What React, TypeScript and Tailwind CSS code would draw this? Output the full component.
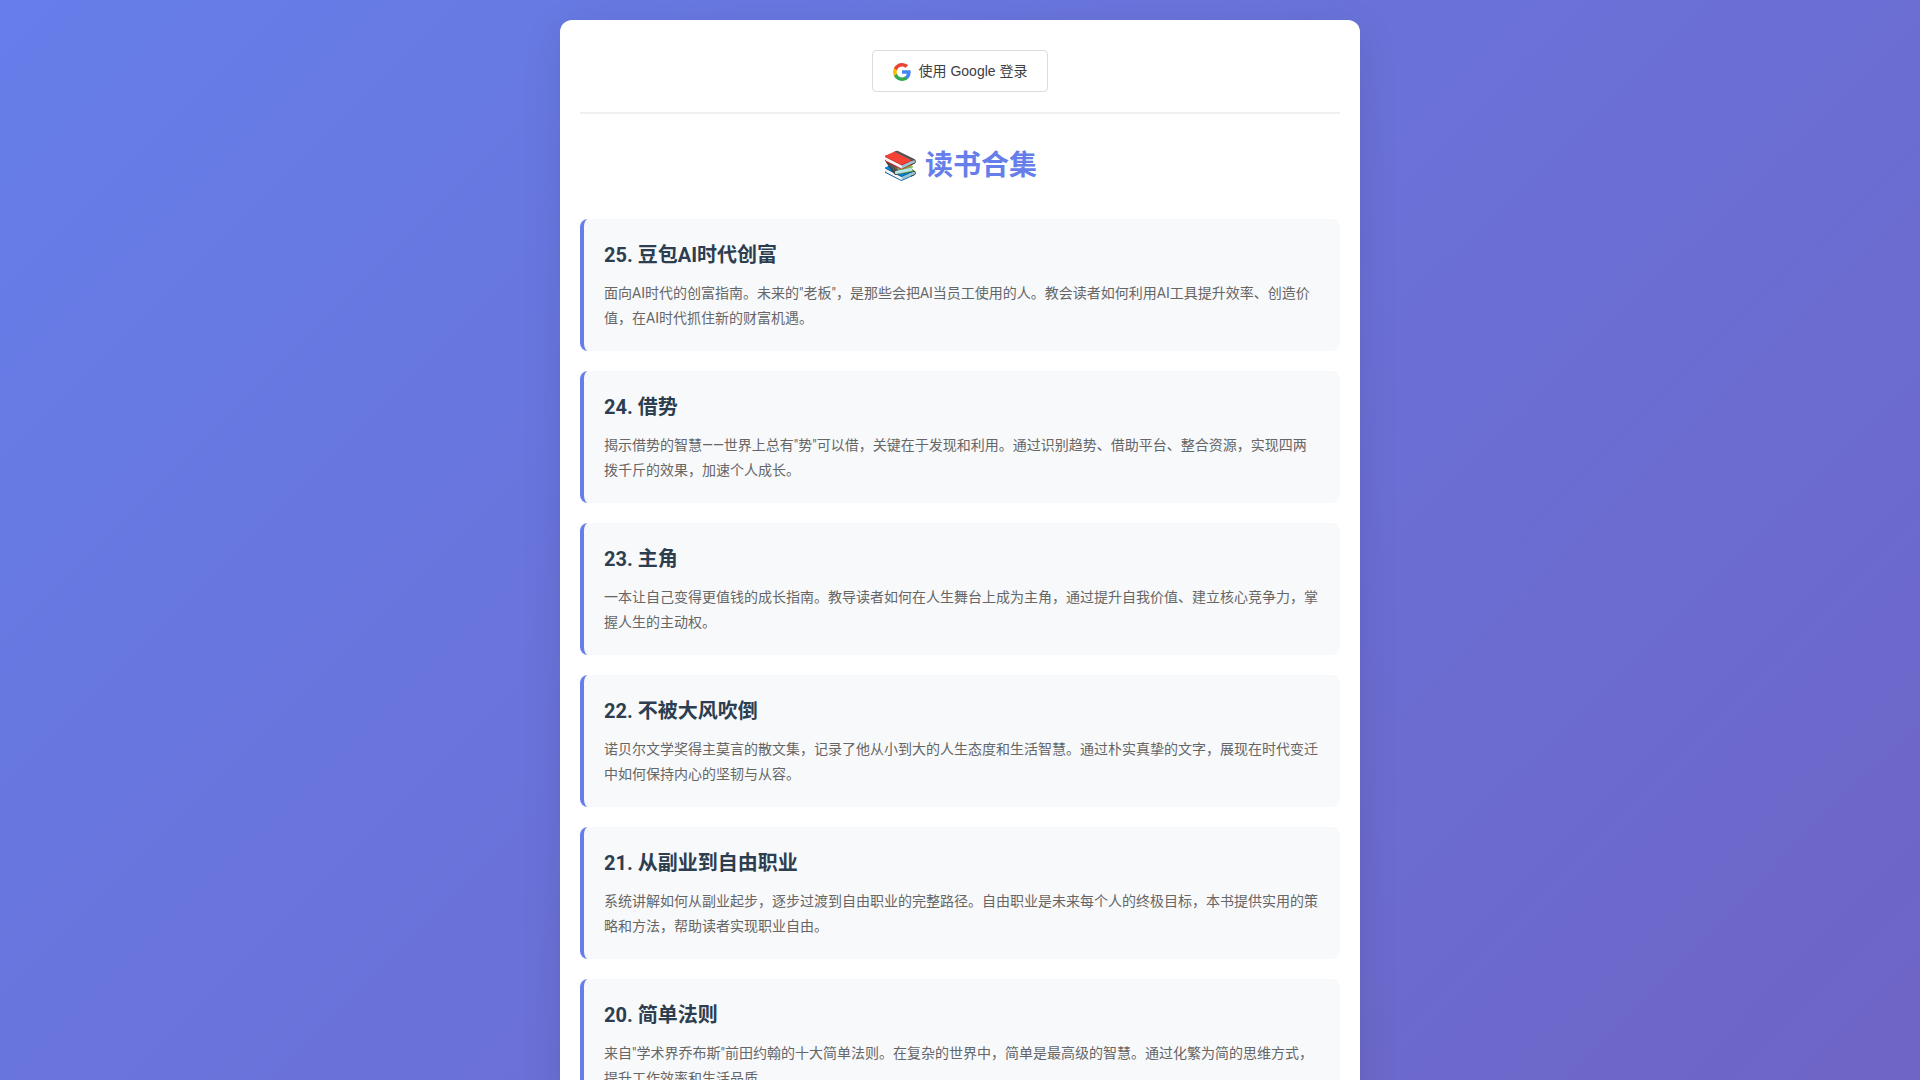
const books = [
  {
    no: 25,
    title: '豆包AI时代创富',
    text: '面向AI时代的创富指南。未来的"老板"，是那些会把AI当员工使用的人。教会读者如何利用AI工具提升效率、创造价值，在AI时代抓住新的财富机遇。',
  },
  {
    no: 24,
    title: '借势',
    text: '揭示借势的智慧——世界上总有"势"可以借，关键在于发现和利用。通过识别趋势、借助平台、整合资源，实现四两拨千斤的效果，加速个人成长。',
  },
  {
    no: 23,
    title: '主角',
    text: '一本让自己变得更值钱的成长指南。教导读者如何在人生舞台上成为主角，通过提升自我价值、建立核心竞争力，掌握人生的主动权。',
  },
  {
    no: 22,
    title: '不被大风吹倒',
    text: '诺贝尔文学奖得主莫言的散文集，记录了他从小到大的人生态度和生活智慧。通过朴实真挚的文字，展现在时代变迁中如何保持内心的坚韧与从容。',
  },
  {
    no: 21,
    title: '从副业到自由职业',
    text: '系统讲解如何从副业起步，逐步过渡到自由职业的完整路径。自由职业是未来每个人的终极目标，本书提供实用的策略和方法，帮助读者实现职业自由。',
  },
  {
    no: 20,
    title: '简单法则',
    text: '来自"学术界乔布斯"前田约翰的十大简单法则。在复杂的世界中，简单是最高级的智慧。通过化繁为简的思维方式，提升工作效率和生活品质。',
  },
];

function GoogleLogo() {
  return (
    <svg viewBox="1 1 22 22" className="size-[18px]" aria-hidden="true">
      <path fill="#4285F4" d="M22.56 12.25c0-.78-.07-1.53-.2-2.25H12v4.26h5.92c-.26 1.37-1.04 2.53-2.21 3.31v2.77h3.57c2.08-1.92 3.28-4.74 3.28-8.09z" />
      <path fill="#34A853" d="M12 23c2.97 0 5.46-.98 7.28-2.66l-3.57-2.77c-.98.66-2.23 1.06-3.71 1.06-2.86 0-5.29-1.93-6.16-4.53H2.18v2.84C3.99 20.53 7.7 23 12 23z" />
      <path fill="#FBBC05" d="M5.84 14.09c-.22-.66-.35-1.36-.35-2.09s.13-1.43.35-2.09V7.07H2.18C1.43 8.55 1 10.22 1 12s.43 3.45 1.18 4.93l3.66-2.84z" />
      <path fill="#EA4335" d="M12 5.38c1.62 0 3.06.56 4.21 1.64l3.15-3.15C17.45 2.09 14.97 1 12 1 7.7 1 3.99 3.47 2.18 7.07l3.66 2.84c.87-2.6 3.3-4.53 6.16-4.53z" />
    </svg>
  );
}

function BookCard({ no, title, text }: { no: number; title: string; text: string }) {
  return (
    <article className="rounded-lg border-l-4 border-[#667eea] bg-[#f8f9fb] p-5">
      <h2 className="mb-[10px] text-xl leading-8 font-bold text-[#2c3e50]">
        {no}. {title}
      </h2>
      <p className="text-sm leading-[25px] text-[#666666]">{text}</p>
    </article>
  );
}

export default function App() {
  return (
    <div
      lang="zh-CN"
      className="min-h-screen bg-[linear-gradient(135deg,#667eea_0%,#764ba2_195%)] p-5 font-['Roboto','Noto_Sans_CJK_SC',sans-serif]"
    >
      <main className="mx-auto max-w-[800px] rounded-xl bg-white p-5 shadow-[0_10px_40px_rgba(0,0,0,0.1)]">
        <header className="mb-[30px] flex justify-center border-b-2 border-[#f0f0f0] pt-[10px] pb-5">
          <button
            type="button"
            className="flex items-center gap-2 rounded border border-[#dadce0] bg-white px-5 pt-[10px] pb-[9px] font-['Liberation_Sans','Noto_Sans_CJK_SC',sans-serif] text-sm leading-[21px] font-normal text-[#3c4043]"
          >
            <GoogleLogo />
            使用 Google 登录
          </button>
        </header>
        <h1 className="mb-8 text-center text-[28px] leading-[43px] font-bold text-[#667eea]">📚 读书合集</h1>
        <div className="flex flex-col gap-5">
          {books.map((book) => (
            <BookCard key={book.no} {...book} />
          ))}
        </div>
      </main>
    </div>
  );
}
